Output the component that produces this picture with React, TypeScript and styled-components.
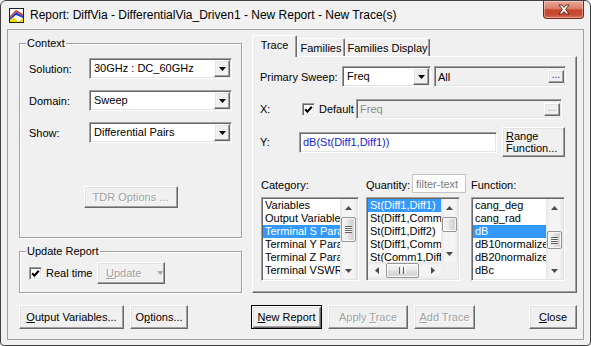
import React from 'react';
import styled, { createGlobalStyle, css } from 'styled-components';

const FONT = '"Liberation Sans", Arial, sans-serif';

const GlobalStyle = createGlobalStyle`
	* {
		box-sizing: border-box;
	}
	html,
	body {
		margin: 0;
		padding: 0;
		background: #ffffff;
	}
	body {
		font-family: ${FONT};
		font-size: 11px;
		color: #000000;
	}
`;

const raised = css`
	border: 1px solid;
	border-color: #ffffff #696969 #696969 #ffffff;
	box-shadow: inset -1px -1px #a0a0a0, inset 1px 1px #e3e3e3;
	background: #f0f0f0;
`;

const sunken = css`
	border: 1px solid;
	border-color: #a0a0a0 #ffffff #ffffff #a0a0a0;
	box-shadow: inset 1px 1px #696969, inset -1px -1px #e3e3e3;
`;

/* ---------- window frame ---------- */

const Window = styled.div`
	width: 591px;
	height: 346px;
	display: flex;
	flex-direction: column;
	padding: 0 6px 5px 6px;
	border: 1px solid #404040;
	border-radius: 6px 6px 4px 4px;
	background: #f1f1f1;
	overflow: hidden;
`;

const TitleBar = styled.div`
	display: flex;
	align-items: center;
	height: 28px;
	flex: none;
`;

const Title = styled.div`
	margin-left: 6px;
	font-size: 12px;
	line-height: 14px;
	white-space: nowrap;
`;

const CloseButton = styled.div`
	align-self: flex-start;
	margin-left: auto;
	width: 41px;
	height: 18px;
	display: flex;
	align-items: center;
	justify-content: center;
	border: 1px solid #6e2a1c;
	border-top: none;
	border-radius: 0 0 4px 4px;
	background: linear-gradient(#e9a898 0%, #db7e66 45%, #c8472e 52%, #c54a31 80%, #d8735a 100%);
	box-shadow: inset 0 0 0 1px rgba(255, 255, 255, 0.35);
`;

const Client = styled.div`
	flex: 1;
	display: flex;
	flex-direction: column;
	border: 1px solid #a0a0a0;
	background: #f0f0f0;
	padding: 0 6px 0 11px;
`;

const Main = styled.div`
	display: flex;
	gap: 10px;
	height: 263px;
	flex: none;
`;

/* ---------- left column ---------- */

const LeftColumn = styled.div`
	width: 223px;
	display: flex;
	flex-direction: column;
`;

const Group = styled.div<{ $height: number; $top: number }>`
	position: relative;
	height: ${(p) => p.$height}px;
	margin-top: ${(p) => p.$top}px;
	display: flex;
	flex-direction: column;
	border: 1px solid #a0a0a0;
	box-shadow: inset 1px 1px #ffffff, 1px 1px #ffffff;
`;

const GroupLabel = styled.span`
	position: absolute;
	top: -7px;
	left: 6px;
	padding: 0 1px;
	line-height: 13px;
	background: #f0f0f0;
`;

const ContextGrid = styled.div`
	display: grid;
	grid-template-columns: 60px 143px;
	grid-auto-rows: 21px;
	row-gap: 11px;
	align-items: center;
	padding: 14px 0 0 9px;
`;

const FieldLabel = styled.span`
	white-space: nowrap;
`;

const ComboBox = styled.div<{ $width: number }>`
	${sunken}
	width: ${(p) => p.$width}px;
	height: 21px;
	display: flex;
	align-items: stretch;
	padding: 1px;
	background: #ffffff;
`;

const ComboValue = styled.span`
	flex: 1;
	padding-left: 3px;
	line-height: 17px;
	white-space: nowrap;
	overflow: hidden;
`;

const DropButton = styled.span`
	${raised}
	width: 16px;
	flex: none;
	display: flex;
	align-items: center;
	justify-content: center;
`;

const Button = styled.button<{ $width: number; $height?: number; $default?: boolean }>`
	${raised}
	width: ${(p) => p.$width}px;
	height: ${(p) => p.$height ?? 24}px;
	flex: none;
	padding: 0;
	display: flex;
	align-items: center;
	justify-content: center;
	font: 11px ${FONT};
	color: #000000;
	&:disabled {
		color: #a0a0a0;
		text-shadow: 1px 1px #ffffff;
	}
	${(p) =>
		p.$default &&
		css`
			border-color: #000000;
			box-shadow: inset 1px 1px #ffffff, inset -1px -1px #696969, inset 2px 2px #e3e3e3,
				inset -2px -2px #a0a0a0;
		`}
`;

const TdrButton = styled(Button)`
	align-self: center;
	margin-top: 43px;
`;

const Key = styled.span`
	text-decoration: underline;
`;

const UpdateRow = styled.div`
	display: flex;
	align-items: center;
	height: 22px;
	margin: 10px 0 0 9px;
`;

const CheckBox = styled.span`
	${sunken}
	width: 13px;
	height: 13px;
	flex: none;
	display: flex;
	align-items: center;
	justify-content: center;
	background: #ffffff;
`;

const CheckText = styled.span<{ $width: number }>`
	width: ${(p) => p.$width}px;
	margin-left: 4px;
	white-space: nowrap;
	flex: none;
`;

const UpdateButton = styled(Button)`
	justify-content: flex-start;
	padding-left: 8px;
	gap: 16px;
`;

/* ---------- right column ---------- */

const RightColumn = styled.div`
	width: 325px;
	display: flex;
	flex-direction: column;
`;

const TabStrip = styled.div`
	position: relative;
	z-index: 1;
	display: flex;
	align-items: flex-end;
	height: 21px;
	margin-top: 5px;
`;

const Tab = styled.div<{ $active?: boolean; $width: number }>`
	width: ${(p) => p.$width}px;
	height: ${(p) => (p.$active ? 22 : 18)}px;
	margin-bottom: ${(p) => (p.$active ? -1 : 0)}px;
	display: flex;
	justify-content: center;
	align-items: ${(p) => (p.$active ? 'flex-start' : 'center')};
	padding-top: ${(p) => (p.$active ? 3 : 0)}px;
	border: 1px solid;
	border-bottom: none;
	border-color: #ffffff #696969 transparent #ffffff;
	border-radius: 2px 2px 0 0;
	box-shadow: inset -1px 0 #a0a0a0;
	background: #f0f0f0;
	white-space: nowrap;
`;

const TabPanel = styled.div`
	height: 238px;
	display: flex;
	flex-direction: column;
	padding: 9px 0 0 7px;
	border: 1px solid;
	border-color: #ffffff #696969 #696969 #ffffff;
	box-shadow: inset -1px -1px #a0a0a0;
`;

const PanelRow = styled.div<{ $top: number; $height: number }>`
	display: flex;
	align-items: center;
	margin-top: ${(p) => p.$top}px;
	height: ${(p) => p.$height}px;
`;

const RowLabel = styled.span<{ $width: number }>`
	width: ${(p) => p.$width}px;
	flex: none;
	white-space: nowrap;
`;

const Field = styled.div<{ $width: number; $height: number; $disabled?: boolean; $gap?: number }>`
	${sunken}
	width: ${(p) => p.$width}px;
	height: ${(p) => p.$height}px;
	margin-left: ${(p) => p.$gap ?? 0}px;
	flex: none;
	display: flex;
	align-items: center;
	padding: 0 1px 0 3px;
	background: ${(p) => (p.$disabled ? '#f0f0f0' : '#ffffff')};
	color: ${(p) => (p.$disabled ? '#8c8c8c' : '#000000')};
	white-space: nowrap;
`;

const PlainValue = styled.span`
	color: #000000;
`;

const FormulaText = styled.span`
	color: #1c1cd0;
`;

const EllipsisButton = styled.span<{ $disabled?: boolean }>`
	${raised}
	width: 16px;
	height: 13px;
	margin-left: auto;
	display: flex;
	align-items: flex-end;
	justify-content: center;
	padding-bottom: 2px;
	font-size: 10px;
	line-height: 10px;
	color: ${(p) => (p.$disabled ? '#a0a0a0' : '#1c1cd0')};
`;

const RangeButton = styled(Button)`
	margin-left: 5px;
	flex-direction: column;
	align-items: flex-start;
	padding-left: 3px;
	line-height: 12px;
`;

const ListsRow = styled.div`
	display: flex;
	margin: 17px 0 0 1px;
`;

const ListColumn = styled.div<{ $width: number; $gap: number }>`
	width: ${(p) => p.$width}px;
	margin-left: ${(p) => p.$gap}px;
	display: flex;
	flex-direction: column;
`;

const ListHeader = styled.div`
	display: flex;
	align-items: flex-end;
	height: 19px;
	padding-bottom: 2px;
`;

const FilterBox = styled.span`
	margin-left: auto;
	align-self: stretch;
	width: 54px;
	margin-bottom: -2px;
	display: flex;
	align-items: center;
	padding-left: 3px;
	border: 1px solid #c5c5c5;
	background: #ffffff;
	color: #7a7a7a;
	white-space: nowrap;
	overflow: hidden;
`;

const ListBox = styled.div<{ $width: number; $hscroll?: boolean }>`
	${sunken}
	width: ${(p) => p.$width}px;
	height: 84px;
	margin-top: 4px;
	padding: 1px;
	background: #ffffff;
	display: grid;
	grid-template-columns: minmax(0, 1fr) 17px;
	grid-template-rows: ${(p) => (p.$hscroll ? 'minmax(0, 1fr) 17px' : 'minmax(0, 1fr)')};
`;

const ListItems = styled.div`
	overflow: hidden;
`;

const ListItem = styled.div<{ $selected?: boolean; $focus?: boolean }>`
	height: 13px;
	line-height: 13px;
	padding-left: 2px;
	font-size: 11px;
	white-space: nowrap;
	overflow: hidden;
	background: ${(p) => (p.$selected ? '#3399ff' : 'transparent')};
	color: ${(p) => (p.$selected ? '#ffffff' : '#000000')};
	${(p) =>
		p.$focus &&
		css`
			outline: 1px dotted #c07020;
			outline-offset: -1px;
		`}
`;

const ScrollBar = styled.div<{ $horizontal?: boolean }>`
	display: flex;
	flex-direction: ${(p) => (p.$horizontal ? 'row' : 'column')};
	background: ${(p) =>
		p.$horizontal
			? 'linear-gradient(#e6e6e6, #f4f4f4 20%, #f4f4f4 80%, #e6e6e6)'
			: 'linear-gradient(90deg, #e6e6e6, #f4f4f4 20%, #f4f4f4 80%, #e6e6e6)'};
`;

const ScrollArrow = styled.span`
	width: 17px;
	height: 17px;
	flex: none;
	display: flex;
	align-items: center;
	justify-content: center;
`;

const ScrollTrack = styled.div<{ $horizontal?: boolean }>`
	flex: 1;
	display: flex;
	flex-direction: ${(p) => (p.$horizontal ? 'row' : 'column')};
	align-items: center;
	overflow: hidden;
`;

const Thumb = styled.div<{ $offset: number; $size: number; $horizontal?: boolean }>`
	flex: none;
	display: flex;
	align-items: center;
	justify-content: center;
	border: 1px solid #959595;
	border-radius: 2px;
	box-shadow: inset 0 0 0 1px rgba(255, 255, 255, 0.8);
	${(p) =>
		p.$horizontal
			? css`
					width: ${p.$size}px;
					height: 15px;
					margin-left: ${p.$offset}px;
					background: linear-gradient(#f4f4f4, #e9e9e9 48%, #dcdcdc 52%, #d4d4d4);
				`
			: css`
					width: 15px;
					height: ${p.$size}px;
					margin-top: ${p.$offset}px;
					background: linear-gradient(90deg, #f4f4f4, #e9e9e9 48%, #dcdcdc 52%, #d4d4d4);
				`}
`;

const Corner = styled.div`
	background: #f0f0f0;
`;

const BottomBar = styled.div`
	display: flex;
	align-items: center;
	height: 24px;
	margin-top: 12px;
	flex: none;
`;

const ButtonGroup = styled.div<{ $offset: number }>`
	display: flex;
	gap: 6px;
	margin-left: ${(p) => p.$offset}px;
`;

const CloseDialogButton = styled(Button)`
	margin-left: auto;
`;

/* ---------- drawings ---------- */

const AppIcon = () => (
	<svg width="15" height="15" viewBox="0 0 15 15" style={{ marginLeft: 2, flex: 'none' }}>
		<rect x="0.5" y="0.5" width="14" height="14" fill="#ffffff" stroke="#202020" />
		<path d="M1 8 L7 2 L14 6 L14 8 L7 4 L1 10 Z" fill="#e23a1e" />
		<path d="M1 10 L7 4 L14 8 L14 10 L7 7 L1 12 Z" fill="#1f3fd8" />
		<path d="M1 12 L5 9.5 L9 14 L1 14 Z" fill="#f5d800" />
		<path d="M9 14 L14 10 L14 14 Z" fill="#f5d800" />
	</svg>
);

const CloseGlyph = () => (
	<svg width="14" height="11" viewBox="0 0 14 11">
		<path
			d="M2 1 L5 1 L7 3.5 L9 1 L12 1 L8.6 5.5 L12 10 L9 10 L7 7.5 L5 10 L2 10 L5.4 5.5 Z"
			fill="#ffffff"
			stroke="#5a1c10"
			strokeWidth="0.9"
			strokeLinejoin="round"
		/>
	</svg>
);

const DownTriangle: React.FC<{ color?: string }> = ({ color = '#000000' }) => (
	<svg width="7" height="4" viewBox="0 0 7 4">
		<path d="M0 0 H7 L3.5 4 Z" fill={color} />
	</svg>
);

const Arrow: React.FC<{ dir: 'up' | 'down' | 'left' | 'right' }> = ({ dir }) => {
	const paths = {
		up: 'M0 4 L3.5 0 L7 4 Z',
		down: 'M0 0 L7 0 L3.5 4 Z',
		left: 'M4 0 L4 7 L0 3.5 Z',
		right: 'M0 0 L4 3.5 L0 7 Z',
	};
	const vertical = dir === 'up' || dir === 'down';
	return (
		<svg width={vertical ? 7 : 4} height={vertical ? 4 : 7} viewBox={vertical ? '0 0 7 4' : '0 0 4 7'}>
			<path d={paths[dir]} fill="#4a4a4a" />
		</svg>
	);
};

const Grip: React.FC<{ horizontal?: boolean }> = ({ horizontal }) =>
	horizontal ? (
		<svg width="7" height="7" viewBox="0 0 7 7">
			{[0, 2, 4, 6].map((x) => (
				<rect key={x} x={x} y="0" width="1" height="7" fill={x % 4 === 0 ? '#5f5f5f' : '#ffffff'} />
			))}
		</svg>
	) : (
		<svg width="7" height="7" viewBox="0 0 7 7">
			{[0, 1, 2, 3, 4, 5, 6].map((y) => (
				<rect key={y} x="0" y={y} width="7" height="1" fill={y % 2 === 0 ? '#5f5f5f' : '#ffffff'} />
			))}
		</svg>
	);

const CheckMark = () => (
	<svg width="9" height="9" viewBox="0 0 9 9">
		<path d="M1.2 4.2 L3.4 6.6 L7.8 1.8" fill="none" stroke="#000000" strokeWidth="2.1" />
	</svg>
);

/* ---------- pieces ---------- */

interface IComboProps {
	value: string;
	width: number;
}

const Combo: React.FC<IComboProps> = ({ value, width }) => (
	<ComboBox $width={width}>
		<ComboValue>{value}</ComboValue>
		<DropButton>
			<DownTriangle />
		</DropButton>
	</ComboBox>
);

interface IScrollProps {
	offset: number;
	size: number;
	grip?: boolean;
}

const VScroll: React.FC<IScrollProps> = ({ offset, size, grip }) => (
	<ScrollBar>
		<ScrollArrow>
			<Arrow dir="up" />
		</ScrollArrow>
		<ScrollTrack>
			<Thumb $offset={offset} $size={size}>
				{grip && <Grip />}
			</Thumb>
		</ScrollTrack>
		<ScrollArrow>
			<Arrow dir="down" />
		</ScrollArrow>
	</ScrollBar>
);

const HScroll: React.FC<IScrollProps> = ({ offset, size }) => (
	<ScrollBar $horizontal>
		<ScrollArrow>
			<Arrow dir="left" />
		</ScrollArrow>
		<ScrollTrack $horizontal>
			<Thumb $horizontal $offset={offset} $size={size}>
				<Grip horizontal />
			</Thumb>
		</ScrollTrack>
		<ScrollArrow>
			<Arrow dir="right" />
		</ScrollArrow>
	</ScrollBar>
);

const categories = [
	'Variables',
	'Output Variables',
	'Terminal S Parameter',
	'Terminal Y Parameter',
	'Terminal Z Parameter',
	'Terminal VSWR',
	'Terminal Gamma',
];

const quantities = [
	'St(Diff1,Diff1)',
	'St(Diff1,Comm1)',
	'St(Diff1,Diff2)',
	'St(Diff1,Comm2)',
	'St(Comm1,Diff1)',
];

const functions = ['cang_deg', 'cang_rad', 'dB', 'dB10normalize', 'dB20normalize', 'dBc', 'dBm'];

const App: React.FC = () => (
	<>
		<GlobalStyle />
		<Window>
			<TitleBar>
				<AppIcon />
				<Title>Report: DiffVia - DifferentialVia_Driven1 - New Report - New Trace(s)</Title>
				<CloseButton>
					<CloseGlyph />
				</CloseButton>
			</TitleBar>
			<Client>
				<Main>
					<LeftColumn>
						<Group $height={196} $top={13}>
							<GroupLabel>Context</GroupLabel>
							<ContextGrid>
								<FieldLabel>Solution:</FieldLabel>
								<Combo value="30GHz : DC_60GHz" width={143} />
								<FieldLabel>Domain:</FieldLabel>
								<Combo value="Sweep" width={143} />
								<FieldLabel>Show:</FieldLabel>
								<Combo value="Differential Pairs" width={143} />
							</ContextGrid>
							<TdrButton $width={94} $height={22} disabled>
								TDR Options ...
							</TdrButton>
						</Group>
						<Group $height={42} $top={13}>
							<GroupLabel>Update Report</GroupLabel>
							<UpdateRow>
								<CheckBox>
									<CheckMark />
								</CheckBox>
								<CheckText $width={51}>Real time</CheckText>
								<UpdateButton $width={68} $height={22} disabled>
									<span>
										<Key>U</Key>pdate
									</span>
									<DownTriangle color="#a0a0a0" />
								</UpdateButton>
							</UpdateRow>
						</Group>
					</LeftColumn>

					<RightColumn>
						<TabStrip>
							<Tab $active $width={45}>
								Trace
							</Tab>
							<Tab $width={48}>Families</Tab>
							<Tab $width={85}>Families Display</Tab>
						</TabStrip>
						<TabPanel>
							<PanelRow $top={0} $height={21}>
								<RowLabel $width={82}>Primary Sweep:</RowLabel>
								<Combo value="Freq" width={89} />
								<Field $width={132} $height={21} $gap={3} $disabled>
									<PlainValue>All</PlainValue>
									<EllipsisButton>...</EllipsisButton>
								</Field>
							</PanelRow>
							<PanelRow $top={12} $height={20}>
								<RowLabel $width={42}>X:</RowLabel>
								<CheckBox>
									<CheckMark />
								</CheckBox>
								<CheckText $width={37}>Default</CheckText>
								<Field $width={206} $height={20} $disabled>
									Freq
									<EllipsisButton $disabled>...</EllipsisButton>
								</Field>
							</PanelRow>
							<PanelRow $top={8} $height={30}>
								<RowLabel $width={39}>Y:</RowLabel>
								<Field $width={198} $height={21}>
									<FormulaText>dB(St(Diff1,Diff1))</FormulaText>
								</Field>
								<RangeButton $width={63} $height={30}>
									<span>
										<Key>R</Key>ange
									</span>
									<span>Function...</span>
								</RangeButton>
							</PanelRow>
							<ListsRow>
								<ListColumn $width={98} $gap={0}>
									<ListHeader>Category:</ListHeader>
									<ListBox $width={98}>
										<ListItems>
											{categories.map((c, i) => (
												<ListItem key={c} $selected={i === 2}>
													{c}
												</ListItem>
											))}
										</ListItems>
										<VScroll offset={1} size={25} grip />
									</ListBox>
								</ListColumn>
								<ListColumn $width={100} $gap={7}>
									<ListHeader>
										Quantity:
										<FilterBox>filter-text</FilterBox>
									</ListHeader>
									<ListBox $width={94} $hscroll>
										<ListItems>
											{quantities.map((q, i) => (
												<ListItem key={q} $selected={i === 0}>
													{q}
												</ListItem>
											))}
										</ListItems>
										<VScroll offset={1} size={15} />
										<HScroll offset={1} size={33} />
										<Corner />
									</ListBox>
								</ListColumn>
								<ListColumn $width={94} $gap={5}>
									<ListHeader>Function:</ListHeader>
									<ListBox $width={94}>
										<ListItems>
											{functions.map((f, i) => (
												<ListItem key={f} $selected={i === 2} $focus={i === 2}>
													{f}
												</ListItem>
											))}
										</ListItems>
										<VScroll offset={15} size={18} grip />
									</ListBox>
								</ListColumn>
							</ListsRow>
						</TabPanel>
					</RightColumn>
				</Main>

				<BottomBar>
					<ButtonGroup $offset={0}>
						<Button $width={105}>
							<span>
								<Key>O</Key>utput Variables...
							</span>
						</Button>
						<Button $width={58}>
							<span>
								O<Key>p</Key>tions...
							</span>
						</Button>
					</ButtonGroup>
					<ButtonGroup $offset={63}>
						<Button $width={71} $default>
							<span>
								<Key>N</Key>ew Report
							</span>
						</Button>
						<Button $width={80} disabled>
							<span>
								Apply <Key>T</Key>race
							</span>
						</Button>
						<Button $width={61} disabled>
							<span>
								<Key>A</Key>dd Trace
							</span>
						</Button>
					</ButtonGroup>
					<CloseDialogButton $width={48}>
						<span>
							<Key>C</Key>lose
						</span>
					</CloseDialogButton>
				</BottomBar>
			</Client>
		</Window>
	</>
);

export default App;
